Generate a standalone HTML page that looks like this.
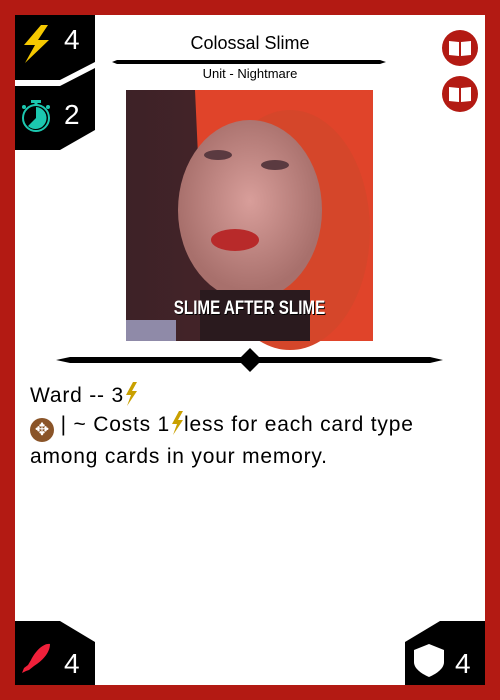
<!DOCTYPE html>
<html><head><style>
html,body{margin:0;padding:0;}
body{width:500px;height:700px;position:relative;background:#b31a13;font-family:"Liberation Sans","DejaVu Sans",sans-serif;overflow:hidden;}
.in{position:absolute;left:15px;top:15px;width:470px;height:670px;background:#fff;}
.abs{position:absolute;}
.num{position:absolute;color:#fff;font-size:28px;line-height:28px;}
.bolt{display:inline-block;width:14px;height:24px;vertical-align:-4px;}
</style></head><body>
<div class="in"></div>
<svg class="abs" style="left:0;top:0" width="500" height="700">
 <polygon points="15,15 95,15 95,62 60,80 15,80" fill="#000"/>
 <polygon points="15,86 60,86 95,68 95,130 60,150 15,150" fill="#000"/>
 <polygon points="15,621 60,621 95,642 95,685 15,685" fill="#000"/>
 <polygon points="485,621 440,621 405,642 405,685 485,685" fill="#000"/>
 <polygon points="41,25 24,45 35,45 25,63 49,40 38,40 48,25" fill="#f5c800"/>
 <circle cx="36" cy="118" r="13" fill="none" stroke="#1cc8b0" stroke-width="2"/>
 <path d="M36,118 L36,107 A11,11 0 1,1 28,126 Z" fill="#1cc8b0"/>
 <rect x="31" y="100" width="10" height="3" fill="#1cc8b0"/>
 <rect x="34.5" y="102" width="3" height="3" fill="#1cc8b0"/>
 <circle cx="24" cy="107" r="2" fill="#1cc8b0"/><circle cx="48" cy="107" r="2" fill="#1cc8b0"/>
 <path d="M50,644 C44,643 36,650 31,660 L28,665 L24,668 L22,673 L26,671 L29,670 L34,666 C42,661 50,653 50,644 Z" fill="#f0203a"/>
 <path d="M429,644 L444,650 L444,662 C444,668 438,673 429,677 C420,673 414,668 414,662 L414,650 Z" fill="#fff"/>
 <polygon points="112,62 117,60 380,60 386,62 380,64 117,64" fill="#000"/>
 <polygon points="56,360 70,357 430,357 443,360 430,363 70,363" fill="#000"/>
 <polygon points="250,348 262,360 250,372 238,360" fill="#000"/>
 <g>
  <circle cx="460" cy="48" r="18" fill="#b31a13"/>
  <path d="M449,41 L459,42 L459,56 L449,55 Z M461,42 L471,41 L471,55 L461,56 Z" fill="#fff"/>
  <circle cx="460" cy="94" r="18" fill="#b31a13"/>
  <path d="M449,87 L459,88 L459,102 L449,101 Z M461,88 L471,87 L471,101 L461,102 Z" fill="#fff"/>
 </g>
 <defs>
  <radialGradient id="face" cx="0.5" cy="0.45" r="0.5"><stop offset="0" stop-color="#d89e9a"/><stop offset="1" stop-color="#a8706c"/></radialGradient>
  <linearGradient id="bg" x1="0" x2="1"><stop offset="0" stop-color="#3d2227"/><stop offset="1" stop-color="#50262a"/></linearGradient>
 </defs>
 <rect x="126" y="90" width="247" height="251" fill="url(#bg)"/>
 <path d="M195,90 L373,90 L373,341 L300,341 L340,250 L200,200 Z" fill="#e0442a"/>
 <ellipse cx="290" cy="230" rx="80" ry="120" fill="#d5462a"/>
 <ellipse cx="250" cy="210" rx="72" ry="90" fill="url(#face)"/>
 <rect x="200" y="290" width="110" height="51" fill="#2a1a1e"/>
 <ellipse cx="235" cy="240" rx="24" ry="11" fill="#b82a2a"/>
 <ellipse cx="218" cy="155" rx="14" ry="5" fill="#5a3a40"/>
 <ellipse cx="275" cy="165" rx="14" ry="5" fill="#5a3a40"/>
 <rect x="126" y="320" width="50" height="21" fill="#8f8aa8"/>
</svg>
<div class="num" style="left:64px;top:26px">4</div>
<div class="num" style="left:64px;top:101px">2</div>
<div class="num" style="left:64px;top:650px">4</div>
<div class="num" style="left:455px;top:650px">4</div>
<div class="abs" style="left:126px;top:298px;width:247px;text-align:center;color:#fff;font-weight:bold;font-size:19px;text-shadow:1px 1px 0 #000;transform:scaleX(0.8);">SLIME AFTER SLIME</div>
<div class="abs" style="left:100px;top:33px;width:300px;text-align:center;font-size:18px;color:#000">Colossal Slime</div>
<div class="abs" style="left:100px;top:66px;width:300px;text-align:center;font-size:13px;color:#000">Unit - Nightmare</div>
<div class="abs" style="left:30px;top:381px;width:420px;font-size:21px;letter-spacing:0.8px;line-height:29px;color:#000">
Ward -- 3<svg class="bolt" viewBox="0 0 14 24"><polygon points="9,0 2,13 7,13 3,24 13,9 8,9 13,0" fill="#c9a000"/></svg><br>
<span style="display:inline-block;width:24px;height:24px;border-radius:50%;background:#8a5428;vertical-align:-4px;color:#fff;font-size:17px;line-height:24px;text-align:center;letter-spacing:0">✥</span> | ~ Costs 1<svg class="bolt" viewBox="0 0 14 24"><polygon points="9,0 2,13 7,13 3,24 13,9 8,9 13,0" fill="#c9a000"/></svg>less for each card type among cards in your memory.
</div>
</body></html>
